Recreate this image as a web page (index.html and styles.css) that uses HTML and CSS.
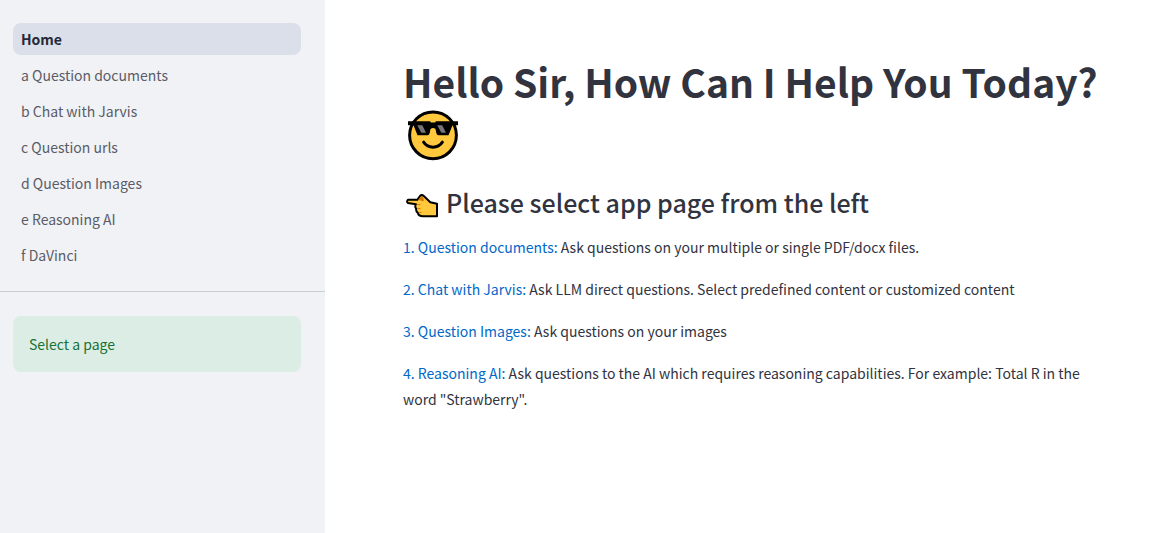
FILE: index.html
```html
<!DOCTYPE html>
<html lang="en">
<head>
<meta charset="utf-8">
<title>Home</title>
<link rel="stylesheet" href="styles.css">
</head>
<body>
<div class="app">
  <aside class="sidebar">
    <nav class="nav">
      <a class="nav-link active" href="#" aria-current="page">Home</a>
      <a class="nav-link" href="#">a Question documents</a>
      <a class="nav-link" href="#">b Chat with Jarvis</a>
      <a class="nav-link" href="#">c Question urls</a>
      <a class="nav-link" href="#">d Question Images</a>
      <a class="nav-link" href="#">e Reasoning AI</a>
      <a class="nav-link" href="#">f DaVinci</a>
    </nav>
    <div class="notice">Select a page</div>
  </aside>
  <main class="main">
    <h1 class="title">Hello Sir, How Can I Help You Today?
      <svg class="face" viewBox="0 0 52 52" role="img" aria-label="Smiling face with sunglasses">
        <circle cx="26" cy="25.3" r="23.4" fill="#ffc83d" stroke="#000" stroke-width="3"/>
        <path d="M1 11.3H23L24 12.5H28L29 11.3H51V15.2H45.5L41.5 25.2H31.5Q29.8 25.2 29.3 23L28.5 19Q26 16.8 23.5 19L22.7 23Q22.2 25.2 20.5 25.2H10.5L6.5 15.2H1Z" fill="#000"/>
        <path d="M10.3 15.3H15.3L19 22.8H14.3ZM30.2 15.3H35.2L39 22.8H34.3Z" fill="#767676"/>
        <path d="M16.6 32.2Q20 37.2 26 37.2T35.4 32.2" fill="none" stroke="#000" stroke-width="3" stroke-linecap="round"/>
      </svg>
    </h1>
    <h2 class="subtitle">
      <svg class="hand" viewBox="0 0 34 26" role="img" aria-label="Pointing left">
        <path d="M2 6.8H11.3L14 3Q15.8 1.2 17.8 3L24.3 9.3L31 10.8V23.3H17Q12.5 23.3 11.8 19.8Q9.8 18.5 10.2 15.8Q8.5 13.5 9.8 11.2L2 10Q.2 8.4 2 6.8Z" fill="#ffc83d" stroke="#000" stroke-width="2" stroke-linejoin="round"/>
        <path d="M12.3 6.8L15 3.8Q16.4 2.8 17.3 4.4Q18.5 6.4 17.2 8.6Z" fill="#d67d00"/>
        <path d="M11 11.5H14.5M11.5 15.5H14.5M13 19.5H15.5" fill="none" stroke="#d67d00" stroke-width="1"/>
      </svg>
      Please select app page from the left</h2>
    <p class="item"><a class="link" href="#">1. Question documents:</a> Ask questions on your multiple or single PDF/docx files.</p>
    <p class="item"><a class="link" href="#">2. Chat with Jarvis:</a> Ask LLM direct questions. Select predefined content or customized content</p>
    <p class="item"><a class="link" href="#">3. Question Images:</a> Ask questions on your images</p>
    <p class="item"><a class="link" href="#">4. Reasoning AI:</a> Ask questions to the AI which requires reasoning capabilities. For example: Total R in the word "Strawberry".</p>
  </main>
</div>
</body>
</html>
```
FILE: styles.css
```css
* { box-sizing: border-box; }
body { margin: 0; font-family: "Noto Sans CJK SC", "Noto Sans", sans-serif; font-size: 14px; color: #31333f; background: #fff; }
.app { display: flex; min-height: 100vh; }
.sidebar { flex: 0 0 325px; background: #f0f2f6; }
.nav { display: flex; flex-direction: column; gap: 4px; padding: 23px 24px 20px 13px; border-bottom: 1px solid #c9cbd2; }
.nav-link { padding: 0 8px; line-height: 32px; border-radius: 8px; color: #5b5c66; text-decoration: none; }
.active { background: #dadfea; color: #262838; font-weight: 700; }
.notice { margin: 24px 24px 0 13px; padding: 16px; line-height: 24px; border-radius: 8px; background: #dcede6; color: #177233; }
.main { flex: 1; padding: 55px 48px 24px 78px; }
.title { margin: 0; font-size: 39px; line-height: 53px; font-weight: 700; }
.face { display: block; width: 52px; height: 52px; margin: 2px 0 0 4px; }
.subtitle { display: flex; align-items: center; gap: 6px; margin: 22px 0 14px; font-size: 25px; line-height: 36px; font-weight: 500; }
.hand { width: 34px; height: 26px; margin: 8px 0 0 3px; }
.item { margin: 0 0 16px; line-height: 26px; }
.link { color: #0068c9; text-decoration: none; }
```
